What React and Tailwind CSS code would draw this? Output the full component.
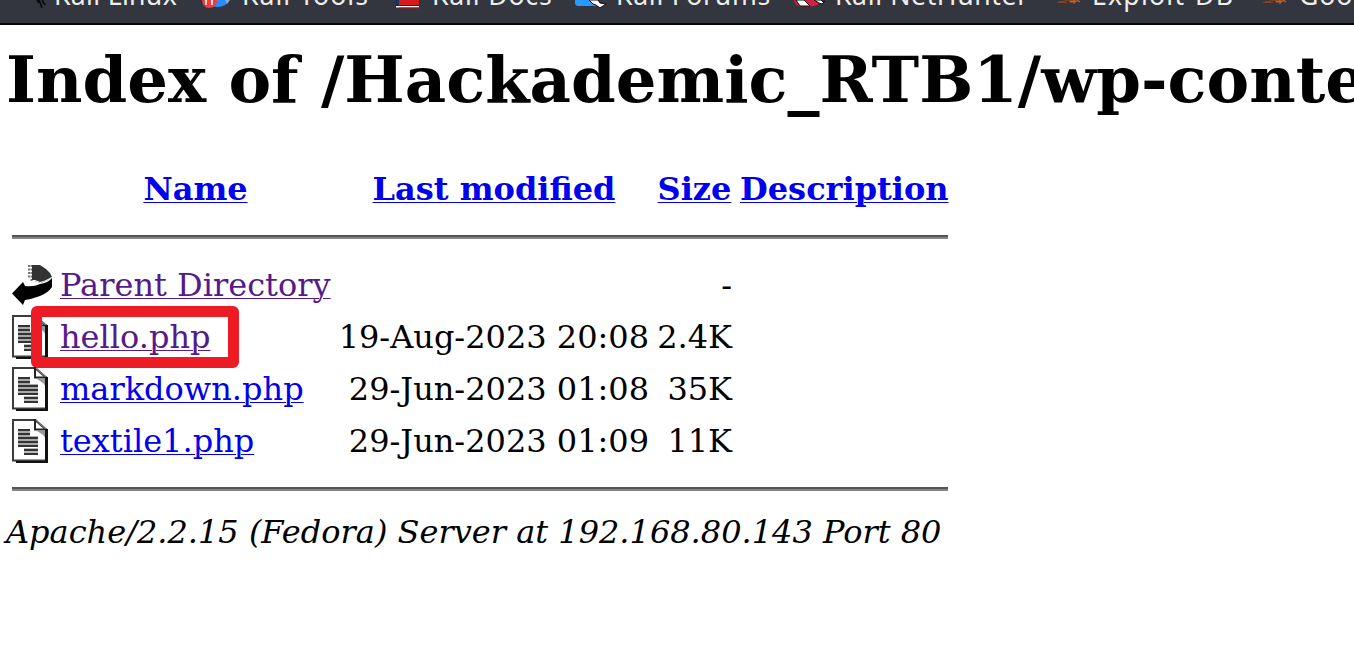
const bookmarks = [
  { label: 'Kali Linux', icon: 'linux', pos: 'w-[179px] pl-[31px]', text: '-ml-[9px] tracking-[0.3px]' },
  { label: 'Kali Tools', icon: 'tools', pos: 'w-[190px] pl-[22px]', text: 'ml-[9px] tracking-[1px]' },
  { label: 'Kali Docs', icon: 'docs', pos: 'w-[183px] pl-[25px]', text: 'ml-[6px] tracking-[0.8px]' },
  { label: 'Kali Forums', icon: 'forums', pos: 'w-[219px] pl-[22px]', text: 'ml-[10px] tracking-[0.7px]' },
  { label: 'Kali NetHunter', icon: 'hunter', pos: 'w-[257px] pl-[23px]', text: 'ml-[9px] tracking-[0.6px]' },
  { label: 'Exploit-DB', icon: 'bug', pos: 'w-[207px] pl-[29px]', text: 'ml-[3px] tracking-[1.2px]' },
  { label: 'Google Hacking DB', icon: 'bug', pos: 'w-[300px] pl-[28px]', text: 'ml-[4px] tracking-[0.8px]' },
];

const art = {
  linux: (
    <path d="M6 0 8 3M8 0l2 5 1 3M11 0l3 5" stroke="#08090b" strokeWidth="1.6" fill="none" />
  ),
  tools: (
    <>
      <path d="M8 0h20q-2 7-12 7-8 0-8-7Z" fill="#2b8cff" />
      <path d="M24 0h5l-3 4Z" fill="#8aa7df" />
      <path d="M1 0h15q0 8-8 8-6 0-7-8Z" fill="#f23b3b" />
      <path d="M5 0v5M11 0v5" stroke="#ffd9d9" strokeWidth="2" />
    </>
  ),
  docs: (
    <>
      <path d="M1 0h24v8H1Z" fill="#173463" />
      <path d="M5 0h20v5H5Z" fill="#d71a1e" />
      <path d="M2 5h23v1H2Z" fill="#17233b" />
      <path d="M2 6h23v1.5H2Z" fill="#fff" />
      <path d="M5 7.5h20V8.500H5Z" fill="#a9151b" />
    </>
  ),
  forums: (
    <>
      <path d="M1 0h23v6H3L1 4Z" fill="#259bff" />
      <path d="M15 0h9l2 3 6 1-6 4-4-3-3-1Z" fill="#fff" stroke="#090a0d" strokeWidth="1" />
    </>
  ),
  hunter: (
    <>
      <path d="M0 0h28q-3 6-12 6.500H6Q1 5 0 0Z" fill="#d41f43" />
      <path d="M2 0h8l6 6H6Z" fill="#fff" stroke="#0b0b0d" strokeWidth="1" />
      <path d="M20 0h7l2 2 2-1-3 3-3-1Z" fill="#fff" stroke="#0b0b0d" strokeWidth="1" />
    </>
  ),
  bug: (
    <>
      <path d="M0 2.500h10M5 1.500l7-1.500M2 1.500h6" stroke="#81431f" strokeWidth="1" />
      <path d="M12 1h10M17 0v4M13 2h6M20 0l3 2" stroke="#d25d16" strokeWidth="1.200" />
    </>
  ),
};

function Bookmark({ item }) {
  return (
    <div className={`flex h-[10px] shrink-0 items-start ${item.pos}`}>
      <svg className="h-[10px] w-[32px] shrink-0" viewBox="0 0 32 10">{art[item.icon]}</svg>
      <span
        className={`-mt-[23px] whitespace-nowrap font-['Noto_Sans',sans-serif] text-[26.67px] leading-[36px] text-[#eeeeec] ${item.text}`}
      >
        {item.label}
      </span>
    </div>
  );
}

function BackIcon() {
  return (
    <svg className="h-[44px] w-[40px]" viewBox="0 0 40 44">
      <path d="M17 2v14M19.500 2v16" stroke="#777" strokeWidth="2" strokeDasharray="2 1.500" />
      <path d="M20 2h8l6 4 4 4 2 4-8 4-4 1-5-2h-3Z" fill="#333" />
      <path d="m0 30.500 11-11.500 2 4q9 1 15-2 8-1 12-6V24q-4 6-12 9-8 3-15 4l-2 5Z" fill="#000" />
      <path d="M23 18.500q6 2 9 0 4-1 7-4" stroke="#bbb" strokeWidth="1" strokeDasharray="2 1" fill="none" />
    </svg>
  );
}

function TextIcon() {
  return (
    <svg className="h-[44px] w-[40px]" viewBox="0 0 40 44">
      <path d="M1 1h22L34.500 11v30.500H1Z" fill="#fff" stroke="#3c3c3c" strokeWidth="2" />
      <path d="M25 12h9v8l-3-4Z" fill="#999" />
      <path d="M23 0v10.500H35" fill="none" stroke="#222" strokeWidth="2" />
      <path d="m24 1 11 10" stroke="#777" strokeWidth="1.500" />
      <path d="M33 10h3v34H4v-2h29Z" fill="#111" />
      <path d="M6 10h12v7h8v11H12v-1H6Z" fill="#aaa" />
      <path d="M12 29h14v6H12Z" fill="#bbb" />
      <path
        d="M6 11h12M6 15h12M6 19h20M6 23h20M6 27h20M12 31h14M12 35h14"
        stroke="#333"
        strokeWidth="2.2"
      />
    </svg>
  );
}

const link = 'underline decoration-1 underline-offset-[2px]';
const cols = 'grid grid-cols-[40px_271px_310px_75px_208px] gap-x-2 whitespace-nowrap';

const rows = [
  { name: 'Parent Directory', date: '', size: '-', back: true, visited: true },
  { name: 'hello.php', date: '19-Aug-2023 20:08', size: '2.4K', visited: true, marked: true },
  { name: 'markdown.php', date: '29-Jun-2023 01:08', size: '35K' },
  { name: 'textile1.php', date: '29-Jun-2023 01:09', size: '11K' },
];

function Row({ row }) {
  return (
    <div className={`relative h-[52px] items-center ${cols}`}>
      {row.back ? <BackIcon /> : <TextIcon />}
      <a className={`justify-self-start ${link} ${row.visited ? 'text-[#551a8b]' : 'text-[#0000ee]'}`}>
        {row.name}
      </a>
      <span className="justify-self-end">{row.date}</span>
      <span className="justify-self-end">{row.size}</span>
      {row.marked && (
        <div className="absolute -top-[5px] left-[19px] h-[62px] w-[208px] rounded-[6px] border-[11px] border-[#ed1c24]" />
      )}
    </div>
  );
}

function Rule() {
  return <div className="h-1 border-t-2 border-[#555] bg-[#858585]" />;
}

export default function App() {
  return (
    <div className="h-[647px] w-[1354px] overflow-hidden bg-white font-['DejaVu_Serif',serif] text-[32px] leading-[37px] text-black">
      <nav className="flex h-[25px] overflow-hidden border-b-2 border-[#07060c] bg-[#33363e]">
        {bookmarks.map((b) => (
          <Bookmark key={b.label} item={b} />
        ))}
      </nav>
      <h1 className="mt-[17px] h-[75px] whitespace-nowrap pl-[6px] text-[64px] leading-[75px] font-bold">
        Index of /Hackademic_RTB1/wp-content/plugins
      </h1>
      <main className="mt-[54px] ml-[12px] w-[936px]">
        <div className={`h-[64px] text-center font-bold text-[#0000ee] ${cols}`}>
          <span />
          <a><span className={link}>Name</span></a>
          <a><span className={link}>Last modified</span></a>
          <a><span className={link}>Size</span></a>
          <a><span className={link}>Description</span></a>
        </div>
        <Rule />
        <div className="pt-[20px] pb-[20px]">
          {rows.map((r) => (
            <Row key={r.name} row={r} />
          ))}
        </div>
        <Rule />
      </main>
      <address className="mt-[23px] whitespace-nowrap pl-[6px] italic">
        Apache/2.2.15 (Fedora) Server at 192.168.80.143 Port 80
      </address>
    </div>
  );
}
